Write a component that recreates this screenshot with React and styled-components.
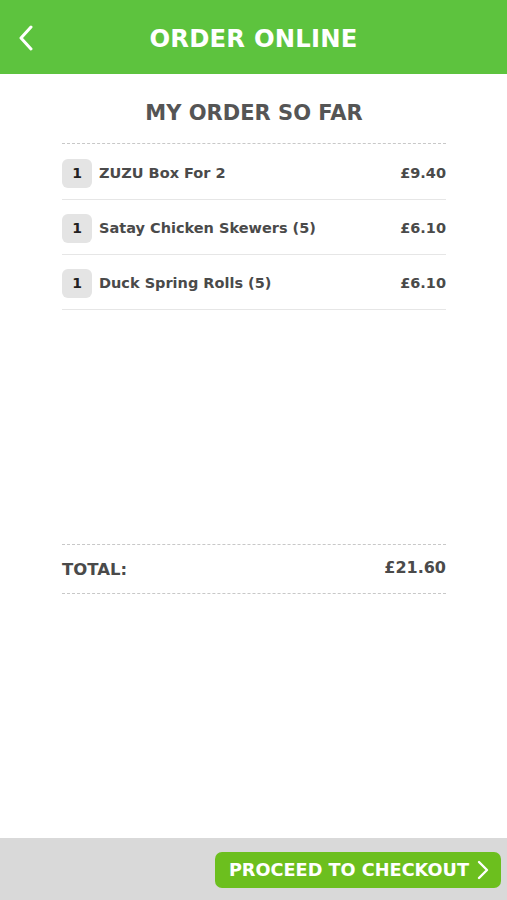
import React from "react";
import styled, { createGlobalStyle } from "styled-components";

const GlobalStyle = createGlobalStyle`
  html, body {
    margin: 0;
    padding: 0;
    background: #fff;
    font-family: "DejaVu Sans", "Open Sans", sans-serif;
  }
  * { box-sizing: border-box; }
`;

const items = [
  { qty: 1, name: "ZUZU Box For 2", price: "£9.40" },
  { qty: 1, name: "Satay Chicken Skewers (5)", price: "£6.10" },
  { qty: 1, name: "Duck Spring Rolls (5)", price: "£6.10" },
];

const App = () => {
  return (
    <Page>
      <GlobalStyle />
      <Header>
        <BackBtn aria-label="back">
          <svg width="16" height="26" viewBox="0 0 16 26" fill="none">
            <path
              d="M13 2 L3 13 L13 24"
              stroke="#fff"
              strokeWidth="3"
              strokeLinecap="round"
              strokeLinejoin="round"
            />
          </svg>
        </BackBtn>
        <Title>ORDER ONLINE</Title>
      </Header>

      <Content>
        <Subtitle>MY ORDER SO FAR</Subtitle>
        <DashLine />
        <List>
          {items.map((item, i) => (
            <Row key={i}>
              <Qty>{item.qty}</Qty>
              <Name>{item.name}</Name>
              <Price>{item.price}</Price>
            </Row>
          ))}
        </List>

        <TotalBlock>
          <DashLine />
          <TotalRow>
            <TotalLabel>TOTAL:</TotalLabel>
            <TotalValue>£21.60</TotalValue>
          </TotalRow>
          <DashLine />
        </TotalBlock>
      </Content>

      <Footer>
        <CheckoutBtn>
          PROCEED TO CHECKOUT
          <svg width="12" height="20" viewBox="0 0 12 20" fill="none">
            <path
              d="M2 2 L10 10 L2 18"
              stroke="#fff"
              strokeWidth="2.4"
              strokeLinecap="round"
              strokeLinejoin="round"
            />
          </svg>
        </CheckoutBtn>
      </Footer>
    </Page>
  );
};

const Page = styled.div`
  display: flex;
  flex-direction: column;
  width: 507px;
  height: 900px;
  background: #fff;
`;

const Header = styled.div`
  position: relative;
  display: flex;
  align-items: center;
  justify-content: center;
  height: 74px;
  padding-top: 2px;
  background: #5dc33e;
`;

const BackBtn = styled.button`
  position: absolute;
  left: 18px;
  top: 25px;
  display: flex;
  padding: 0;
  border: none;
  background: none;
`;

const Title = styled.h1`
  margin: 0;
  color: #fff;
  font-size: 24.3px;
  font-weight: 700;
  letter-spacing: 0.2px;
`;

const Content = styled.div`
  display: flex;
  flex-direction: column;
  flex: 1;
  padding: 0 61px 0 62px;
`;

const Subtitle = styled.h2`
  margin: 27px 0 18px;
  text-align: center;
  color: #555;
  font-size: 21px;
  font-weight: 700;
  line-height: 24px;
`;

const DashLine = styled.div`
  height: 0;
  border-top: 1px dashed #c8c8c8;
`;

const List = styled.div`
  display: flex;
  flex-direction: column;
  padding-top: 1px;
`;

const Row = styled.div`
  display: flex;
  align-items: center;
  height: 55px;
  border-bottom: 1px solid #e6e6e6;
  padding-top: 2px;
`;

const Qty = styled.span`
  display: flex;
  align-items: center;
  justify-content: center;
  width: 30px;
  height: 29px;
  margin-right: 7px;
  border-radius: 6px;
  background: #e4e4e4;
  color: #222;
  font-size: 14px;
  font-weight: 700;
`;

const Name = styled.span`
  flex: 1;
  color: #4a4a4a;
  font-size: 14.5px;
  font-weight: 700;
`;

const Price = styled.span`
  color: #4a4a4a;
  font-size: 14.5px;
  font-weight: 700;
`;

const TotalBlock = styled.div`
  margin-top: 234px;
  display: flex;
  flex-direction: column;
`;

const TotalRow = styled.div`
  display: flex;
  align-items: center;
  justify-content: space-between;
  height: 48px;
`;

const TotalLabel = styled.span`
  color: #4a4a4a;
  font-size: 16.5px;
  font-weight: 700;
`;

const TotalValue = styled.span`
  color: #4a4a4a;
  font-size: 16px;
  font-weight: 700;
  margin-bottom: 3px;
`;

const Footer = styled.div`
  display: flex;
  justify-content: flex-end;
  align-items: flex-start;
  height: 62px;
  padding: 14px 6px 0 0;
  background: #d9d9d9;
`;

const CheckoutBtn = styled.button`
  display: flex;
  align-items: center;
  gap: 8px;
  height: 36px;
  padding: 0 12px 0 14px;
  border: none;
  border-radius: 7px;
  background: #6cbf1e;
  color: #fff;
  font-family: inherit;
  font-size: 17.7px;
  font-weight: 700;
`;

export default App;
